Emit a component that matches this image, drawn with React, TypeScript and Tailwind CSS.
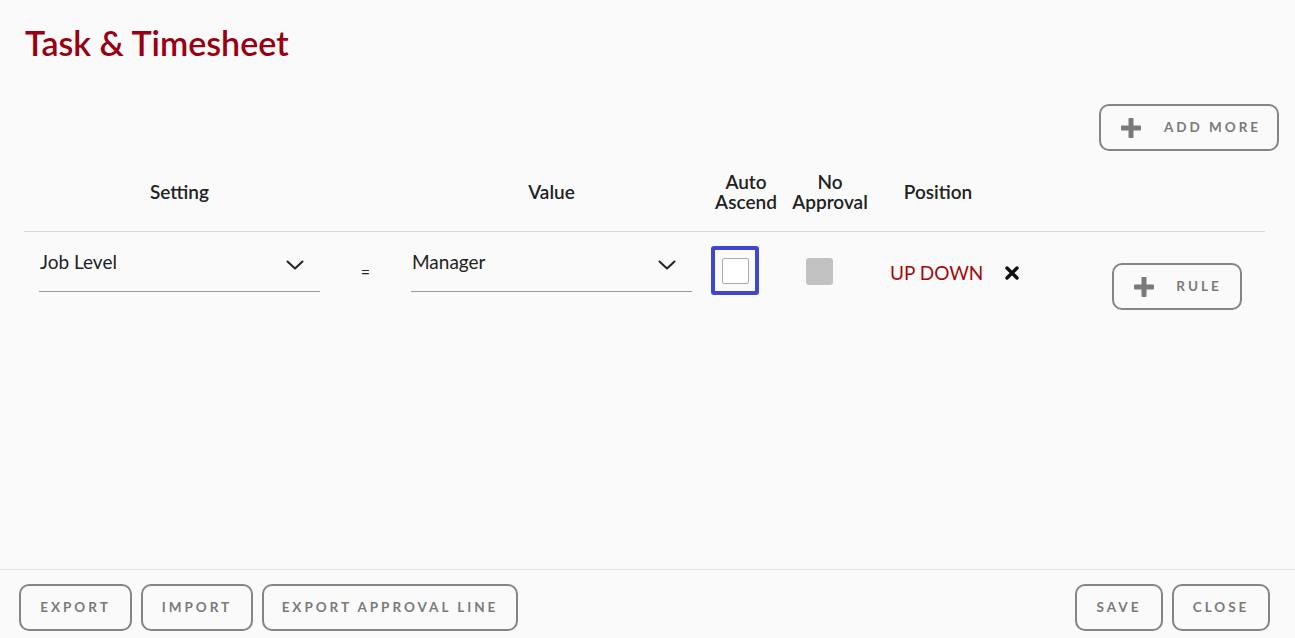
import React from "react";

const Plus = () => (
  <svg width="20" height="20" viewBox="0 0 20 20" className="shrink-0">
    <rect x="7.5" y="0" width="5" height="20" rx="1" fill="#7a7a7a" />
    <rect x="0" y="7.5" width="20" height="5" rx="1" fill="#7a7a7a" />
  </svg>
);

const Chevron = () => (
  <svg width="18" height="10" viewBox="0 0 18 10" fill="none">
    <path d="M1.5 1.5 L9 8.5 L16.5 1.5" stroke="#222" strokeWidth="2" strokeLinecap="round" strokeLinejoin="round" />
  </svg>
);

const Btn = ({ children, className = "" }: { children: React.ReactNode; className?: string }) => (
  <button
    className={
      "h-[47px] rounded-[10px] border-2 border-[#858585] bg-transparent text-[13.5px] font-bold tracking-[0.22em] text-[#7a7a7a] flex items-center justify-center " +
      className
    }
  >
    {children}
  </button>
);

export default function App() {
  return (
    <div
      className="h-screen w-full bg-[#fafafa] flex flex-col text-[#222]"
      style={{ fontFamily: "Lato, 'Open Sans', sans-serif" }}
    >
      <div className="flex-1 flex flex-col">
        <h1 className="pl-[25px] pt-[21px] text-[34px] leading-[44px] font-semibold text-[#990011]">
          Task &amp; Timesheet
        </h1>
        <div className="flex justify-end pr-[16px] mt-[39px]">
          <Btn className="w-[180px] gap-[23px] pl-[4px]">
            <Plus />
            <span>ADD MORE</span>
          </Btn>
        </div>

        <div className="mx-[24px] mr-[30px]">
          <div className="flex items-center h-[60px] mt-[11px] mb-[9px] text-[19px] leading-[20px] font-semibold text-center">
            <div className="w-[311px]">Setting</div>
            <div className="w-[61px]"></div>
            <div className="w-[311px]">Value</div>
            <div className="w-[78px] flex flex-col items-center">
              <span className="block h-[20px] leading-[20px]">Auto</span>
              <span className="block h-[20px] leading-[20px]">Ascend</span>
            </div>
            <div className="w-[90px] flex flex-col items-center">
              <span className="block h-[20px] leading-[20px]">No</span>
              <span className="block h-[20px] leading-[20px]">Approval</span>
            </div>
            <div className="w-[126px]">Position</div>
          </div>
          <div className="border-t border-[#d9d9d9]" />

          <div className="flex items-start">
            <div className="w-[311px] pl-[15px] pr-[15px] pt-[17px]">
              <div className="flex items-center justify-between h-[43px] border-b border-[#9a9a9a] pl-[1px] pr-[16px]">
                <span className="text-[19px] -mt-[15px]">Job Level</span>
                <span className="-mt-[10px]">
                  <Chevron />
                </span>
              </div>
            </div>
            <div className="w-[61px] text-center text-[16px] pt-[28px]">=</div>
            <div className="w-[311px] pl-[15px] pr-[15px] pt-[17px]">
              <div className="flex items-center justify-between h-[43px] border-b border-[#9a9a9a] pl-[1px] pr-[16px]">
                <span className="text-[19px] -mt-[15px]">Manager</span>
                <span className="-mt-[10px]">
                  <Chevron />
                </span>
              </div>
            </div>
            <div className="w-[78px] pt-[14px] pl-[4px] flex justify-start">
              <div className="w-[48px] h-[49px] border-4 border-[#3f46cf] rounded-[3px] flex items-center justify-center">
                <div className="w-[27px] h-[26px] border border-[#ababab] rounded-[2px] bg-white" />
              </div>
            </div>
            <div className="w-[90px] pt-[26px] pl-[21px] flex justify-start">
              <div className="w-[27px] h-[27px] bg-[#c2c2c2] rounded-[3px]" />
            </div>
            <div className="w-[160px] pt-[29px] flex items-center whitespace-nowrap">
              <span className="pl-[15px] text-[19px] leading-[24px] text-[#a30b0b]">UP DOWN</span>
              <span className="ml-[22px]">
                <svg width="14" height="14" viewBox="0 0 14 14">
                  <path d="M2 2 L12 12 M12 2 L2 12" stroke="#111" strokeWidth="3.4" strokeLinecap="round" />
                </svg>
              </span>
            </div>
            <div className="flex-1 flex justify-end pt-[31px] pr-[23px]">
              <Btn className="w-[130px] h-[47px] gap-[22px] pl-[2px]">
                <Plus />
                <span>RULE</span>
              </Btn>
            </div>
          </div>
        </div>
      </div>

      <div className="border-t border-[#e3e3e3] h-[69px] flex items-start justify-between pl-[19px] pr-[25px] pt-[14px]">
        <div className="flex gap-[9px]">
          <Btn className="w-[113px]">EXPORT</Btn>
          <Btn className="w-[112px]">IMPORT</Btn>
          <Btn className="w-[256px]">EXPORT APPROVAL LINE</Btn>
        </div>
        <div className="flex gap-[9px]">
          <Btn className="w-[88px]">SAVE</Btn>
          <Btn className="w-[98px]">CLOSE</Btn>
        </div>
      </div>
    </div>
  );
}
